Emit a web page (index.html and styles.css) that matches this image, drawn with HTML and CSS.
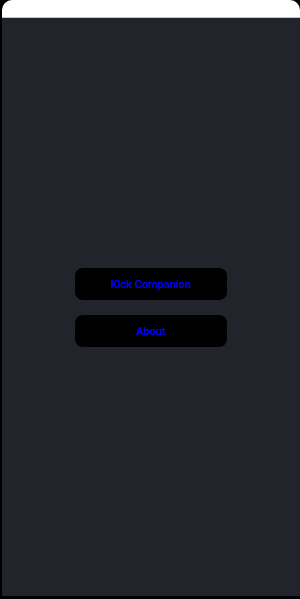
FILE: index.html
```html
<!DOCTYPE html>
<html lang="en">
<head>
  <meta charset="UTF-8" />
  <meta name="viewport" content="width=device-width, initial-scale=1.0"/>
  <title>Kick Companion</title>
  <link rel="stylesheet" href="styles.css">
</head>
<body>
  <div class="app-window">
    <div class="title-bar"></div>
    <div class="main-menu">
      <button class="menu-button">Kick Companion</button>
      <button class="menu-button">About</button>
    </div>
  </div>
</body>
</html>
```

FILE: styles.css
```css
* {
  margin: 0;
  padding: 0;
  box-sizing: border-box;
}

body {
  font-family: Roboto, 'Noto Sans', sans-serif;
  background: #000000;
  width: 300px;
  height: 599px;
  overflow: hidden;
}

.app-window {
  margin-left: 2px;
  height: 596px;
  display: flex;
  flex-direction: column;
}

.title-bar {
  height: 18px;
  background: #ffffff;
  border-radius: 10px 10px 0 0;
  border-bottom: 1px solid #c4c4c4;
}

.main-menu {
  flex: 1;
  background: #21242b;
  display: flex;
  flex-direction: column;
  align-items: center;
  justify-content: center;
  gap: 15px;
}

.menu-button {
  width: 152px;
  height: 32px;
  padding-top: 2px;
  background: #000000;
  border: none;
  border-radius: 8px;
  color: #0000ff;
  font-family: inherit;
  font-size: 11px;
  font-weight: 500;
  cursor: pointer;
}
```
